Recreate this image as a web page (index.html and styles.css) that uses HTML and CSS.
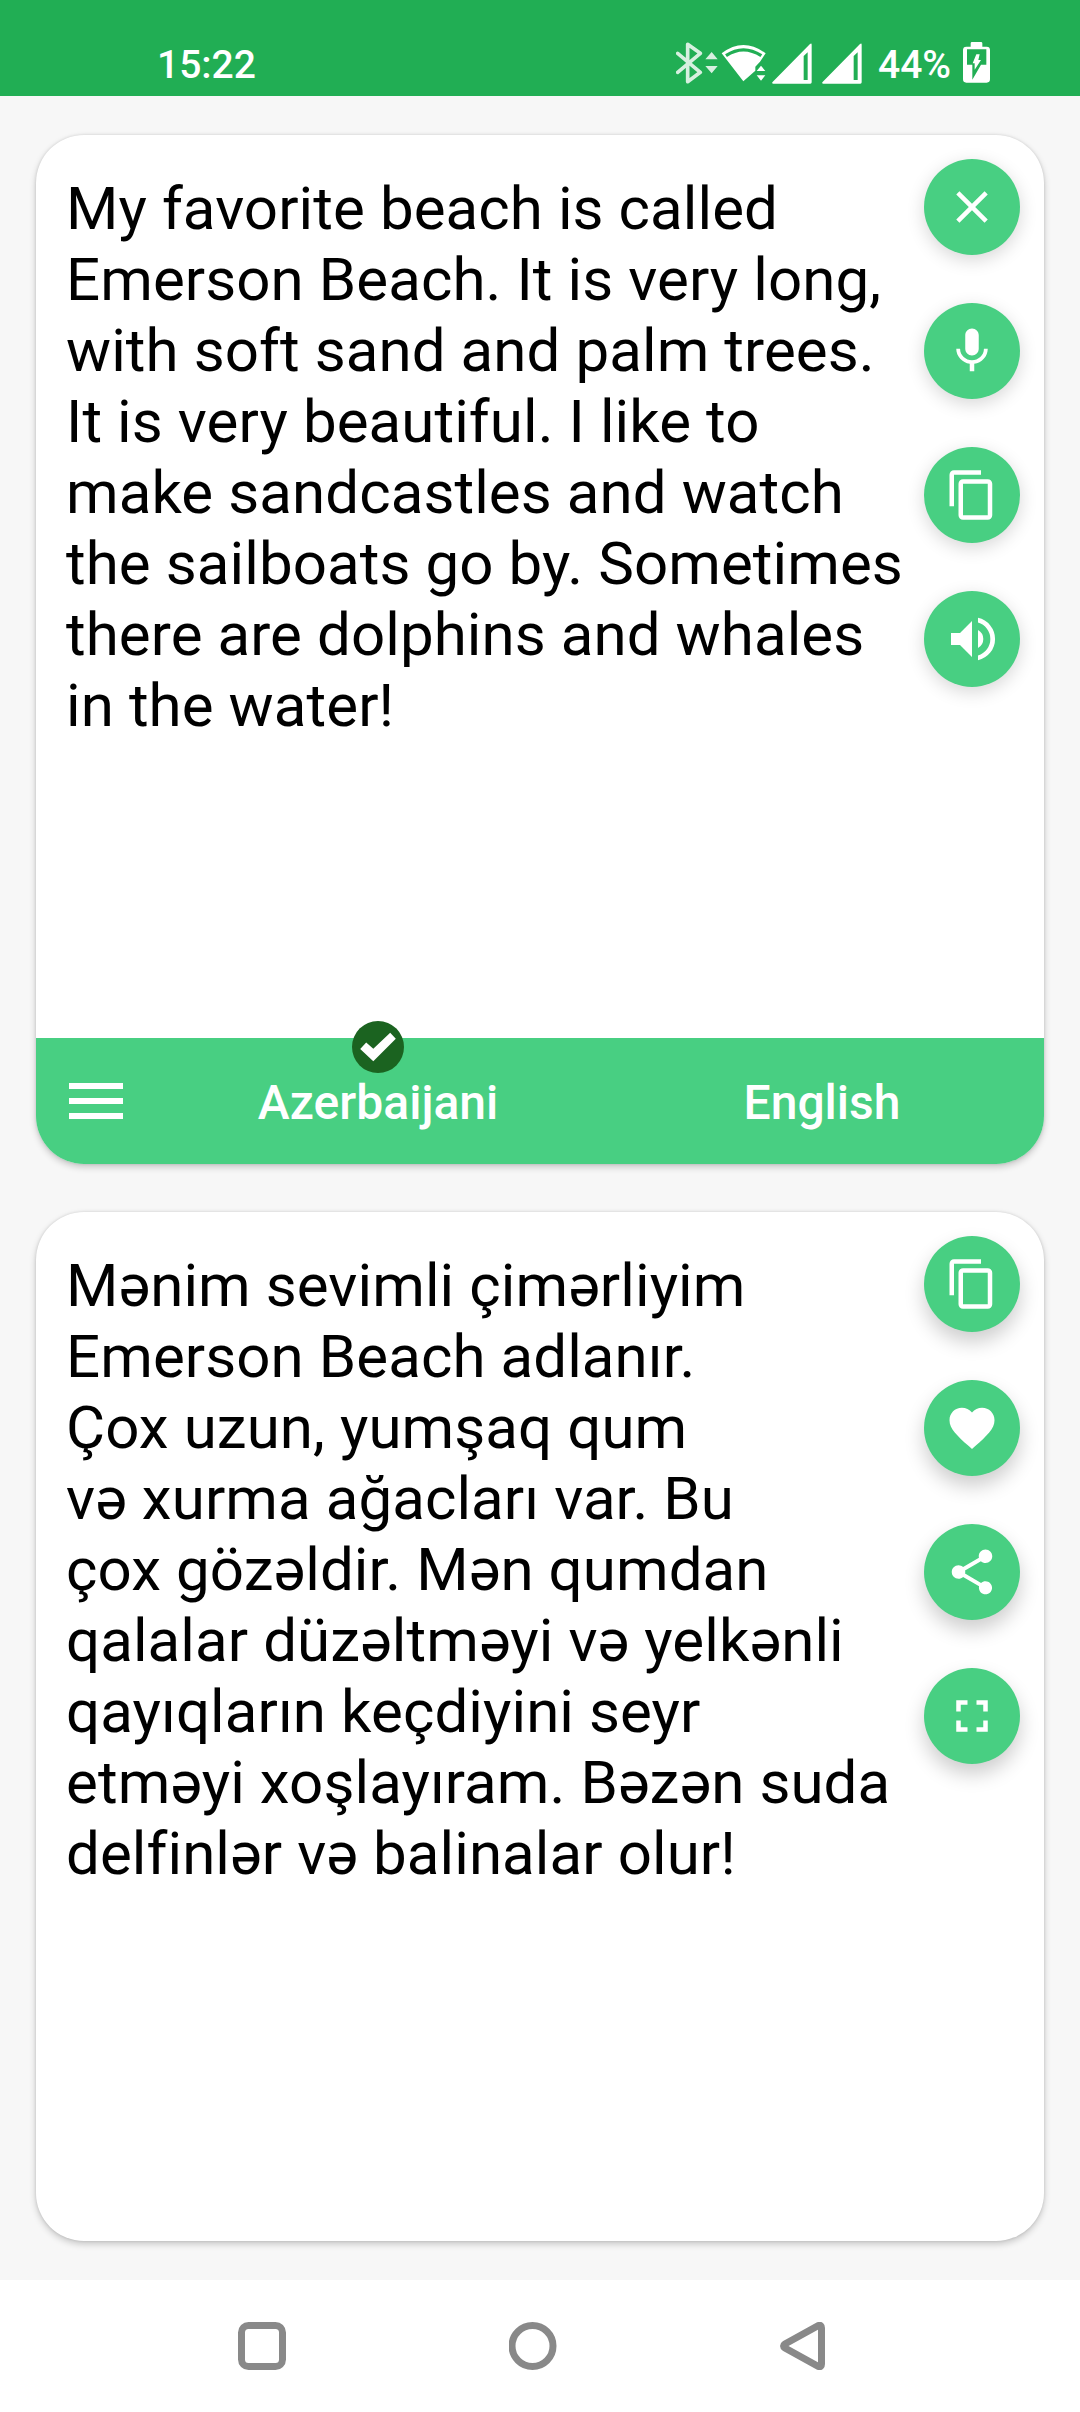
FILE: index.html
```html
<!DOCTYPE html>
<html lang="en">
<head>
<meta charset="utf-8">
<title>Azerbaijani English Translator</title>
<link rel="stylesheet" href="styles.css">
</head>
<body>
<div class="screen">
  <header class="status">
    <span class="clock">15:22</span>
    <div class="indicators">
      <svg class="bt" viewBox="48 63 126 129" width="42" height="43"><path d="M53 100 121 157 83 185V73L121 100 53 157" fill="none" stroke="currentColor" stroke-width="11" stroke-linejoin="round" stroke-linecap="round"/><path d="M136 118h37l-18-22zM136 138h37l-18 22z" fill="currentColor"/></svg>
      <svg class="wifi" viewBox="183 63 135 129" width="45" height="43"><path d="M250 184 185 100Q250 50 317 100L300 125 286 140V152Z" fill="currentColor"/><path d="M198 107Q250 72 304 107" fill="none" stroke="#21ae54" stroke-width="10"/><path d="M290 153h26l-13-16zM290 166h26l-13 16z" fill="currentColor"/></svg>
      <svg class="signal" viewBox="333 63 126 129" width="42" height="43"><path d="M337 187 450 72Q455 68 455 74V187Q455 191 451 191H340Q334 191 337 187ZM431 108V180H443V97Z" fill="currentColor" fill-rule="evenodd"/></svg>
      <svg class="signal" viewBox="333 63 126 129" width="42" height="43"><path d="M337 187 450 72Q455 68 455 74V187Q455 191 451 191H340Q334 191 337 187ZM431 108V180H443V97Z" fill="currentColor" fill-rule="evenodd"/></svg>
      <span class="percent">44%</span>
      <svg class="battery" viewBox="906 63 87 129" width="29" height="43"><path d="M932 80V70Q932 66 936 66H963Q967 66 967 70V80H980Q990 80 990 90V178Q990 188 980 188H919Q909 188 909 178V90Q909 80 919 80Z" fill="currentColor"/><path d="M921 88H979V134H963L937 179V134H921Z" fill="#21ae54"/><path d="M949 103H959L955 120H963L944 149V130H938Z" fill="currentColor"/></svg>
    </div>
  </header>

  <main class="content">
    <section class="card source">
      <div class="pane">
        <p class="text">My favorite beach is called
Emerson Beach. It is very long,
with soft sand and palm trees.
It is very beautiful. I like to
make sandcastles and watch
the sailboats go by. Sometimes
there are dolphins and whales
in the water!</p>
        <div class="actions">
          <button class="fab" aria-label="Clear"><svg viewBox="0 0 24 24"><path d="M19 6.41 17.59 5 12 10.59 6.41 5 5 6.41 10.59 12 5 17.59 6.41 19 12 13.41 17.59 19 19 17.59 13.41 12z"/></svg></button>
          <button class="fab" aria-label="Speak"><svg viewBox="0 0 24 24"><path d="M12 14c1.66 0 2.99-1.34 2.99-3L15 5c0-1.66-1.34-3-3-3S9 3.34 9 5v6c0 1.66 1.34 3 3 3zm5.3-3c0 3-2.54 5.1-5.3 5.1S6.7 14 6.7 11H5c0 3.41 2.72 6.23 6 6.72V21h2v-3.28c3.28-.48 6-3.3 6-6.72h-1.7z"/></svg></button>
          <button class="fab" aria-label="Copy"><svg viewBox="0 0 24 24"><path d="M16 1H4c-1.1 0-2 .9-2 2v14h2V3h12V1zm3 4H8c-1.1 0-2 .9-2 2v14c0 1.1.9 2 2 2h11c1.100 0 2-.9 2-2V7c0-1.100-.9-2-2-2zm0 16H8V7h11v14z"/></svg></button>
          <button class="fab" aria-label="Listen"><svg viewBox="0 0 54 54"><path d="M6 21h9L27 9V45L15 33H6ZM33 18Q38.300 21 38.300 27T33 36ZM33 5.800A21.700 21.700 0 0 1 33 48.200V43.500A17.200 17.200 0 0 0 33 10.500Z"/></svg></button>
        </div>
      </div>
      <nav class="languages">
        <button class="menu" aria-label="Menu"><svg viewBox="0 0 24 24"><path d="M3 18h18v-2H3v2zm0-5h18v-2H3v2zm0-7v2h18V6H3z"/></svg></button>
        <button class="language">Azerbaijani<svg class="check" viewBox="0 0 52 52"><circle cx="26" cy="26" r="26" fill="#1b6320"/><path d="m8.200 28 6-6.500 7.100 6.300L38.200 11.700l5.600 6L21.300 40.300z" fill="#fff"/></svg></button>
        <button class="language">English</button>
      </nav>
    </section>

    <section class="card target">
      <div class="pane">
        <p class="text" lang="az">Mənim sevimli çimərliyim
Emerson Beach adlanır.
Çox uzun, yumşaq qum
və xurma ağacları var. Bu
çox gözəldir. Mən qumdan
qalalar düzəltməyi və yelkənli
qayıqların keçdiyini seyr
etməyi xoşlayıram. Bəzən suda
delfinlər və balinalar olur!</p>
        <div class="actions">
          <button class="fab" aria-label="Copy"><svg viewBox="0 0 24 24"><path d="M16 1H4c-1.1 0-2 .9-2 2v14h2V3h12V1zm3 4H8c-1.1 0-2 .9-2 2v14c0 1.1.9 2 2 2h11c1.100 0 2-.9 2-2V7c0-1.100-.9-2-2-2zm0 16H8V7h11v14z"/></svg></button>
          <button class="fab" aria-label="Favorite"><svg viewBox="0 0 24 24"><path d="M12 21.350l-1.450-1.320C5.400 15.360 2 12.280 2 8.500 2 5.420 4.420 3 7.500 3c1.740 0 3.410.81 4.500 2.090C13.090 3.810 14.760 3 16.500 3 19.580 3 22 5.420 22 8.500c0 3.780-3.400 6.860-8.550 11.540L12 21.350z"/></svg></button>
          <button class="fab" aria-label="Share"><svg viewBox="0 0 24 24"><path d="M18 16.080c-.76 0-1.440.3-1.960.77L8.910 12.700c.05-.23.09-.46.09-.7s-.04-.47-.09-.7l7.050-4.110c.54.5 1.250.81 2.040.81 1.660 0 3-1.340 3-3s-1.340-3-3-3-3 1.340-3 3c0 .24.04.47.09.7L8.040 9.810C7.500 9.310 6.790 9 6 9c-1.660 0-3 1.340-3 3s1.340 3 3 3c.79 0 1.500-.31 2.040-.81l7.120 4.160c-.05.21-.08.43-.08.65 0 1.610 1.310 2.920 2.920 2.920s2.920-1.310 2.920-2.920-1.310-2.920-2.920-2.920z"/></svg></button>
          <button class="fab" aria-label="Full screen"><svg viewBox="0 0 24 24"><path d="M7 14H5v5h5v-2H7v-3zm-2-4h2V7h3V5H5v5zm12 7h-3v2h5v-5h-2v3zM14 5v2h3v3h2V5h-5z"/></svg></button>
        </div>
      </div>
    </section>
  </main>

  <footer class="system-nav">
    <svg width="48" height="48" viewBox="0 0 48 48"><rect x="3.500" y="3.500" width="41" height="41" rx="7"/></svg>
    <svg width="48" height="48" viewBox="0 0 48 48"><circle cx="23.500" cy="24" r="20.500"/></svg>
    <svg width="48" height="48" viewBox="0 0 48 48"><path d="M38.500 3.500Q41.500 2.500 41.500 6V42Q41.500 45.500 38.500 44.500L5 26Q2 24 5 22Z"/></svg>
  </footer>
</div>
</body>
</html>
```

FILE: styles.css
```css
* {
  box-sizing: border-box;
}

body {
  margin: 0;
  font-family: Roboto, "Noto Sans", sans-serif;
  background: #f7f7f7;
}

button {
  display: flex;
  align-items: center;
  justify-content: center;
  margin: 0;
  padding: 0;
  border: 0;
  background: none;
  color: #fff;
  font: inherit;
}

svg {
  display: block;
  flex: none;
}

.screen {
  display: flex;
  flex-direction: column;
  width: 1080px;
  height: 2412px;
}

/* Status bar */
.status {
  display: flex;
  justify-content: space-between;
  height: 96px;
  padding: 41px 89px 0 157px;
  background: #21ae54;
  color: #fff;
  font-size: 39px;
  font-weight: 500;
  line-height: 48px;
}

.indicators {
  display: flex;
}

.bt {
  opacity: 0.82;
  margin-right: 3px;
}

.wifi {
  margin-right: 5px;
}

.signal {
  margin-right: 8px;
}

.percent {
  width: 83px;
  margin: 0 1px 0 7px;
}

/* Translation cards */
.content {
  display: flex;
  flex: 1;
  flex-direction: column;
  gap: 48px;
  padding: 39px 36px;
}

.card {
  display: flex;
  flex: 1;
  flex-direction: column;
  border-radius: 48px;
  background: #fff;
  box-shadow: 0 3px 7px rgba(0, 0, 0, 0.2), 0 0 3px rgba(0, 0, 0, 0.12);
}

.pane {
  display: flex;
  flex: 1;
  justify-content: space-between;
  padding: 24px 24px 0 30px;
}

.text {
  margin: 14px 0 0;
  color: #000;
  font-size: 60px;
  letter-spacing: 0.09px;
  line-height: 71px;
  white-space: pre;
}

.actions {
  display: flex;
  flex-direction: column;
  gap: 48px;
}

.fab {
  width: 96px;
  height: 96px;
  border-radius: 50%;
  background: #48cf82;
  box-shadow: 0 5px 18px rgba(0, 0, 0, 0.16);
}

.target .fab {
  box-shadow: 0 10px 20px rgba(0, 0, 0, 0.2);
}

.fab svg {
  width: 54px;
  height: 54px;
  fill: #fff;
}

/* Language bar */
.languages {
  display: flex;
  height: 126px;
  border-radius: 0 0 48px 48px;
  background: #48cf82;
  font-size: 48px;
  font-weight: 500;
}

.menu {
  width: 120px;
}

.menu svg {
  width: 72px;
  height: 72px;
  fill: #fff;
}

.language {
  position: relative;
  flex: 1;
  padding-top: 2px;
}

.check {
  position: absolute;
  top: -17px;
  left: 50%;
  width: 52px;
  height: 52px;
  transform: translateX(-50%);
}

/* System navigation */
.system-nav {
  display: flex;
  justify-content: space-between;
  height: 132px;
  padding: 42px 252px 0 238px;
  background: #fff;
}

.system-nav svg {
  fill: none;
  stroke: #898989;
  stroke-width: 7;
}
```
